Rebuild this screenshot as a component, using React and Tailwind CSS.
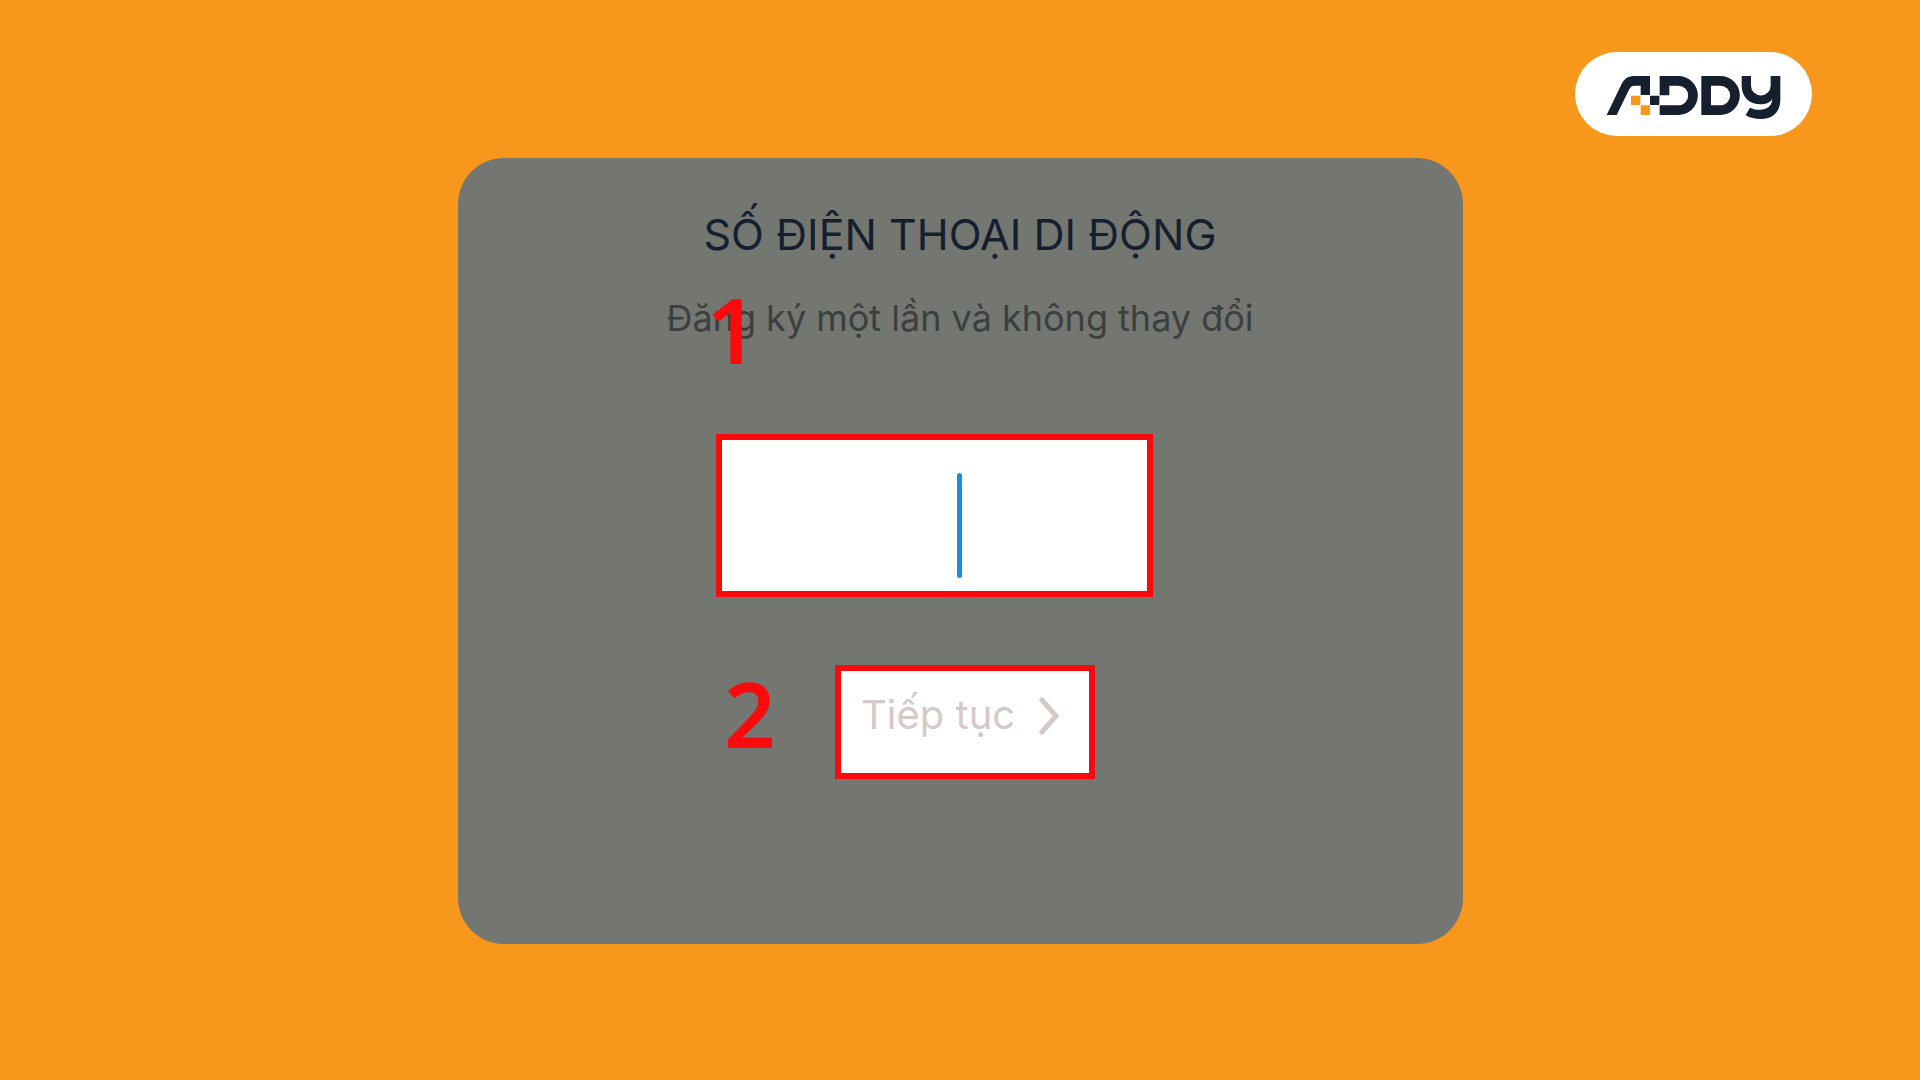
function AddyLogo() {
  return (
    <svg viewBox="138 105 528 135" className="h-[45px] w-44" role="img" aria-label="Addy">
      <g fill="#151f2d">
        <path d="M140 225L186 130Q197 108 221 108H270V165H242V137H224Q213 137 208 147L170 225Z" />
        <rect x="270" y="167" width="28" height="28" rx="2" />
        <path d="M299 108H355A58.5 58.5 0 0 1 355 225H299V196H355A29.5 29.5 0 0 0 355 137H328V166H299Z" />
        <path
          fillRule="evenodd"
          d="M424 108H481A58.5 58.5 0 0 1 481 225H424ZM453 137V196H481A29.5 29.5 0 0 0 481 137Z"
        />
        <path d="M545 108H573V137A29.5 29.5 0 0 0 632 137V108H661V178C661 215 640 237 602 237C585 237 570 234 557 226L570 203C580 208 590 209 600 209C620 209 635 200 637 177C628 190 615 193 602 193C568 193 545 170 545 137Z" />
      </g>
      <g fill="#f7971c">
        <rect x="213" y="167" width="28" height="28" rx="2" />
        <rect x="242" y="196" width="28" height="29" rx="2" />
      </g>
    </svg>
  );
}

export default function App() {
  return (
    <div className="min-h-screen bg-[#f7971c] font-['Inter','Liberation_Sans',sans-serif]">
      <header className="flex justify-end pt-[52px] pr-[108px]">
        <a href="#" className="block h-[84px] rounded-full bg-white pt-[23px] pr-[30px] pl-[31px]">
          <AddyLogo />
        </a>
      </header>

      <main className="mx-auto mt-[22px] flex w-full max-w-[1005px] flex-col items-center rounded-[46px] bg-[#747672] pt-12 pb-[165px]">
        <h1 className="text-[43px] leading-[56px] text-[#151f2d]">SỐ ĐIỆN THOẠI DI ĐỘNG</h1>
        <div className="relative mt-7">
          <p id="hint" className="text-[36px] leading-[56px] text-[#3c3f40]">
            Đăng ký một lần và không thay đổi
          </p>
          <span className="absolute top-1 left-10 font-['Noto_Sans',sans-serif] text-[90px] leading-[70px] font-semibold text-[#f90a0c]">
            1
          </span>
        </div>

        <form className="mt-[88px] mr-[51px] w-[437px]" onSubmit={(e) => e.preventDefault()}>
          <div className="relative">
            <input
              type="tel"
              aria-label="Số điện thoại di động"
              aria-describedby="hint"
              className="block h-[163px] w-full border-[6px] border-[#f90a0c] bg-white text-center text-[44px] outline-none"
            />
            <span className="pointer-events-none absolute top-[39px] left-[241px] h-[105px] w-[5px] rounded-full bg-[#168fde]" />
          </div>
          <div className="mt-[68px] flex justify-between pr-[58px] pl-2">
            <span className="font-['Noto_Sans',sans-serif] text-[90px] leading-[96px] font-semibold text-[#f90a0c]">
              2
            </span>
            <button
              type="submit"
              className="flex h-[114px] w-[260px] items-start gap-6 border-[6px] border-[#f90a0c] bg-white pt-4 pl-5 text-[40px] leading-[56px] text-[#d4cac8]"
            >
              Tiếp tục
              <svg viewBox="0 0 22 38" className="mt-[10px] h-[38px] w-[22px]" fill="none" stroke="currentColor" strokeWidth="5">
                <path d="M3 3L17 19L3 35" strokeLinecap="round" />
              </svg>
            </button>
          </div>
        </form>
      </main>
    </div>
  );
}
